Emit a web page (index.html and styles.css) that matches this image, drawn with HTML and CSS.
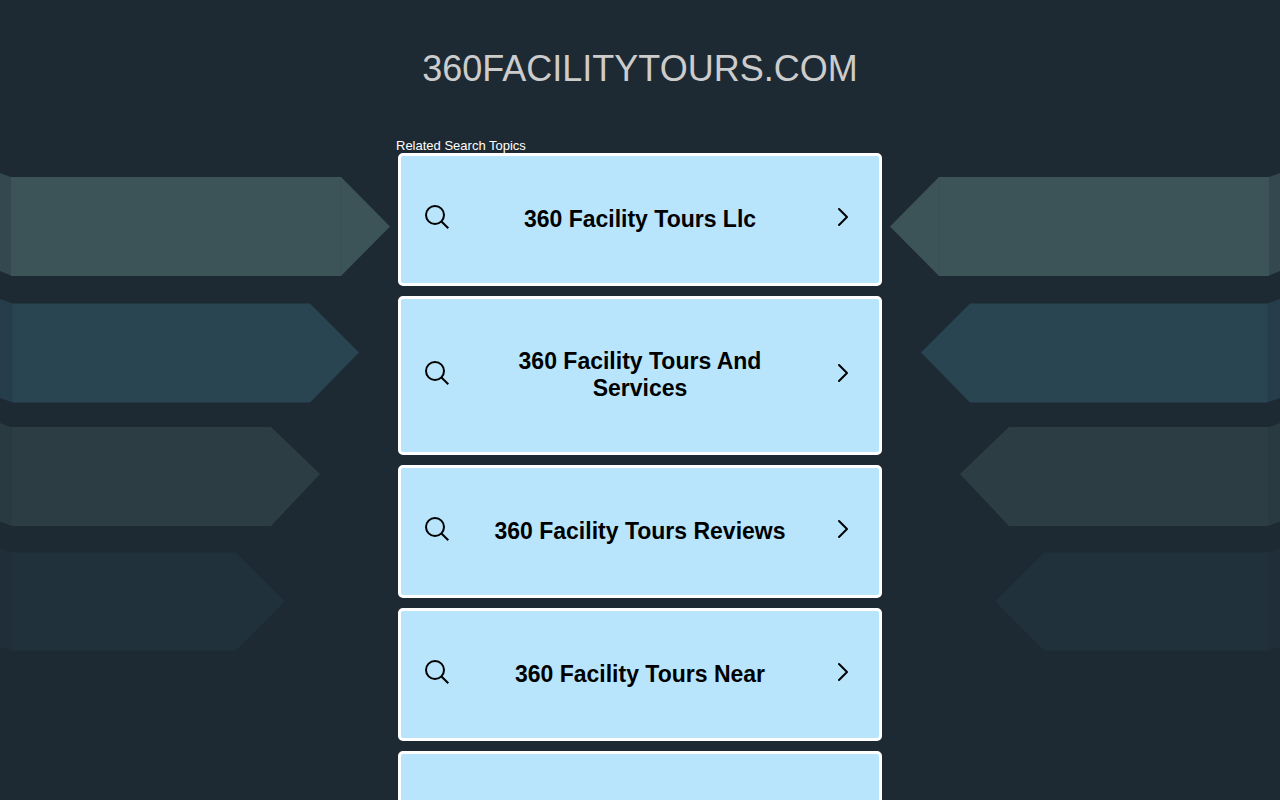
FILE: index.html
```html
<!DOCTYPE html>
<html lang="en">
<head>
<meta charset="utf-8">
<meta name="viewport" content="width=device-width, initial-scale=1">
<title>360facilitytours.com</title>
<link rel="stylesheet" href="styles.css">
</head>
<body>
<svg class="defs" aria-hidden="true">
  <symbol id="arrows" viewBox="0 0 400 800">
    <path fill="#344850" d="M0 173L12 177.500V276L0 271z"/>
    <path fill="#3c5457" d="M11 177H341L390 226.500L341 276H11z"/>
    <path fill="none" stroke="#385054" d="M340.500 178V275"/>
    <path fill="#263e4b" d="M0 299L13 303.500V402.500L0 398z"/>
    <path fill="#294552" d="M12.500 303.500H310L359 352.500L310 402.500H12.500z"/>
    <path fill="none" stroke="#284350" d="M309.500 304V402"/>
    <path fill="#293a41" d="M0 423L12 427.500V526L0 521.500z"/>
    <path fill="#2c3e44" d="M12 427H271L320 474L271 526H12z"/>
    <path fill="#1f2e39" d="M0 548L12 552.500V650.500L0 647z"/>
    <path fill="#20313c" d="M12 552.500H236L285 601.500L236 650.500H12z"/>
    <path fill="none" stroke="#202f3a" d="M235.500 553V650"/>
  </symbol>
  <symbol id="search" viewBox="0 0 26 26">
    <g fill="none" stroke="currentColor" stroke-width="2"><circle cx="11" cy="11" r="9"/><path d="M17.200 17.200L24.300 24.300"/></g>
  </symbol>
  <symbol id="chevron" viewBox="0 0 12 20">
    <path fill="none" stroke="currentColor" stroke-width="2" stroke-linecap="round" stroke-linejoin="round" d="M2 2L10 10L2 18"/>
  </symbol>
</svg>
<div class="page">
  <svg class="arrows" aria-hidden="true"><use href="#arrows"/></svg>
  <svg class="arrows arrows-right" aria-hidden="true"><use href="#arrows"/></svg>
  <header><h1 class="title">360FACILITYTOURS.COM</h1></header>
  <main class="topics">
    <h2 class="label">Related Search Topics</h2>
    <nav class="list" aria-label="Related Search Topics">
      <a class="card" href="#"><svg class="icon"><use href="#search"/></svg><span>360 Facility Tours Llc</span><svg class="icon chevron"><use href="#chevron"/></svg></a>
      <a class="card" href="#"><svg class="icon"><use href="#search"/></svg><span>360 Facility Tours And Services</span><svg class="icon chevron"><use href="#chevron"/></svg></a>
      <a class="card" href="#"><svg class="icon"><use href="#search"/></svg><span>360 Facility Tours Reviews</span><svg class="icon chevron"><use href="#chevron"/></svg></a>
      <a class="card" href="#"><svg class="icon"><use href="#search"/></svg><span>360 Facility Tours Near</span><svg class="icon chevron"><use href="#chevron"/></svg></a>
      <a class="card" href="#" aria-label="More topics"></a>
    </nav>
  </main>
</div>
</body>
</html>
```
FILE: styles.css
```css
* { box-sizing: border-box; }
body {
  margin: 0;
  background: #1e2a33;
  font-family: "Liberation Sans", Arial, sans-serif;
}
.defs { display: none; }
.page {
  position: relative;
  height: 100vh;
  overflow: hidden;
  padding: 48px 16px 0;
}
.arrows {
  position: absolute;
  top: 0;
  left: 0;
  width: 400px;
  height: 800px;
}
.arrows-right {
  left: auto;
  right: 0;
  transform: scaleX(-1);
}
.title {
  margin: 0;
  color: #ccc;
  font-size: 36px;
  font-weight: 400;
  line-height: 42px;
  text-align: center;
}
.topics {
  position: relative;
  max-width: 488px;
  margin: 48px auto 0;
}
.label {
  margin: 0;
  color: #fff;
  font-size: 13px;
  font-weight: 400;
  line-height: 15px;
}
.list {
  display: flex;
  flex-direction: column;
  gap: 10px;
  padding: 0 2px;
}
.card {
  display: grid;
  grid-template-columns: 26px 1fr 26px;
  align-items: center;
  column-gap: 40px;
  min-height: 133px;
  padding: 49px 23px 50px;
  border: 3px solid #fff;
  border-radius: 5px;
  background: #b8e5fc;
  color: #000;
  font-size: 23px;
  font-weight: 700;
  line-height: 27px;
  text-align: center;
  text-decoration: none;
}
.icon {
  width: 26px;
  height: 26px;
  margin-top: -4px;
}
.chevron {
  width: 12px;
  height: 20px;
  justify-self: center;
}
```
